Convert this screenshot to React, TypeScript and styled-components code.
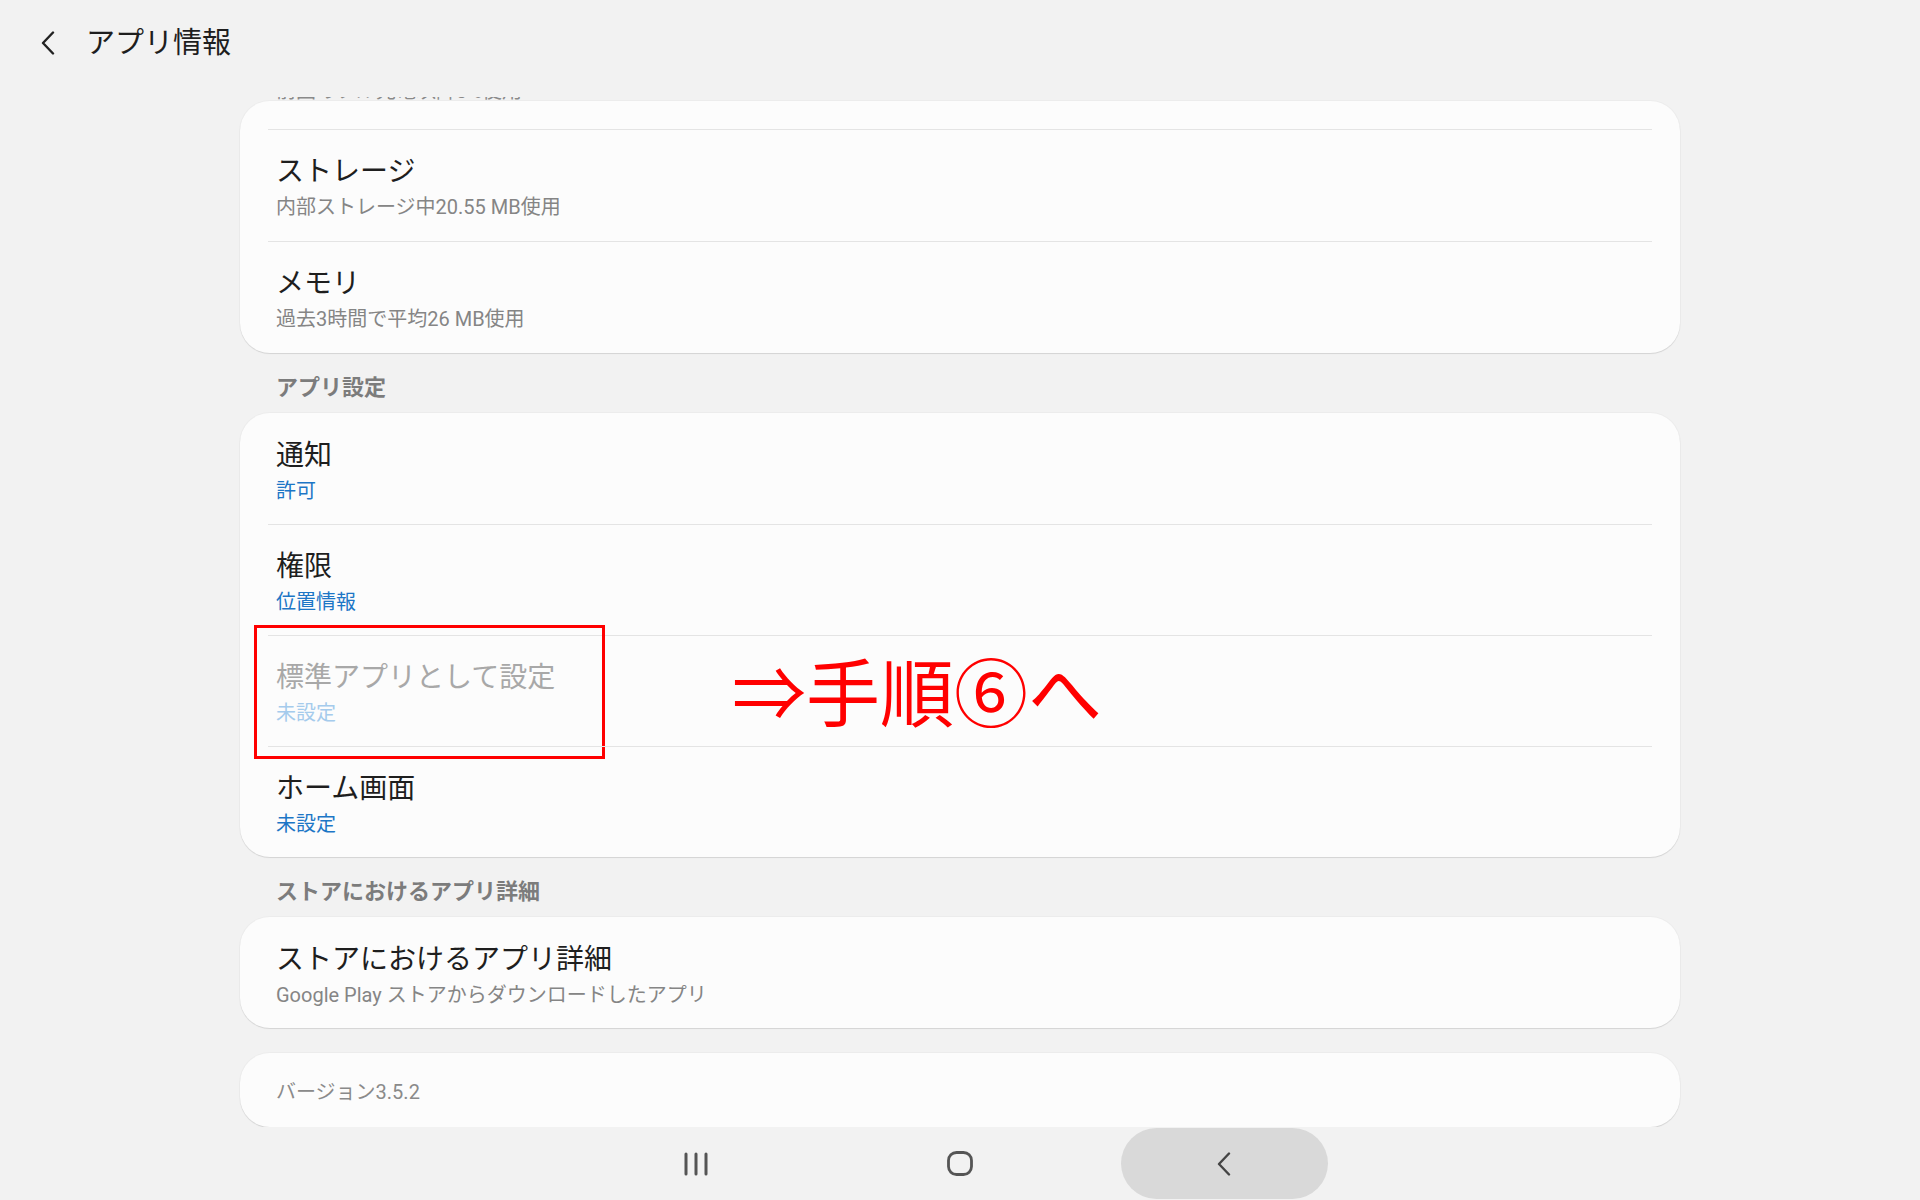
import styled, { createGlobalStyle } from 'styled-components';

const GlobalStyle = createGlobalStyle`
  html, body {
    margin: 0;
    padding: 0;
    background: #f2f2f2;
  }
  body {
    font-family: "Roboto", "Noto Sans CJK JP", sans-serif;
    color: #1e1e1e;
  }
  * {
    box-sizing: border-box;
  }
`;

const Screen = styled.div`
  width: 1920px;
  height: 1200px;
  display: flex;
  flex-direction: column;
  overflow: hidden;
  background: #f2f2f2;
`;

const Header = styled.header`
  height: 97px;
  flex: none;
  display: flex;
  align-items: flex-start;
  gap: 31px;
  padding: 27px 0 0 41px;
`;

const HeaderLine = styled.div`
  height: 32px;
  display: flex;
  align-items: center;
`;

const HeaderTitle = styled.h1`
  margin: 0;
  font-size: 29px;
  font-weight: 400;
  line-height: 32px;
  color: #1e1e1e;
`;

const Viewport = styled.main`
  flex: 1;
  overflow: hidden;
`;

const Column = styled.div`
  width: 1440px;
  margin: 0 auto;
  display: flex;
  flex-direction: column;
`;

// last line of the item scrolled away above the first card
const Peek = styled.div`
  height: 4px;
  overflow: hidden;
  padding-left: 36px;
  font-size: 20px;
  line-height: 28px;
  color: #8a8a8a;

  span {
    display: block;
    margin-top: -20px;
  }
`;

const Card = styled.section`
  background: #fcfcfc;
  border-radius: 30px;
  box-shadow: 0 0 0 1px rgba(0, 0, 0, 0.025), 0 1px 1px rgba(0, 0, 0, 0.1);
  display: flex;
  flex-direction: column;
`;

const TopStub = styled.div`
  height: 28px;
`;

const Row = styled.div<{ $height?: number; $divider?: boolean }>`
  position: relative;
  height: ${(p) => p.$height ?? 111}px;
  padding: 24px 36px 0;
  display: flex;
  flex-direction: column;

  &::before {
    content: '';
    display: ${(p) => (p.$divider ? 'block' : 'none')};
    position: absolute;
    top: 0;
    left: 28px;
    right: 28px;
    height: 1px;
    background: #e4e4e4;
  }
`;

const Title = styled.div<{ $disabled?: boolean }>`
  font-size: 28px;
  line-height: 38px;
  color: ${(p) => (p.$disabled ? '#a8a8a8' : '#1e1e1e')};
`;

const Sub = styled.div<{ $tone?: 'gray' | 'blue' | 'fadedBlue' }>`
  margin-top: 2px;
  font-size: 20px;
  line-height: 28px;
  color: ${(p) =>
    p.$tone === 'blue' ? '#1d76c6' : p.$tone === 'fadedBlue' ? '#a5cbec' : '#858585'};
`;

const SectionLabel = styled.div`
  height: 60px;
  padding: 22px 36px 0;
  font-size: 22px;
  line-height: 26px;
  font-weight: 700;
  color: #7c7c7c;
`;

const Gap = styled.div<{ $h: number }>`
  height: ${(p) => p.$h}px;
`;

const VersionRow = styled.div`
  height: 74px;
  padding: 0 36px;
  display: flex;
  align-items: center;
  font-size: 20px;
  color: #8a8a8a;
`;

const Marker = styled.div`
  position: absolute;
  left: 14px;
  top: -10px;
  width: 351px;
  height: 134px;
  border: 3px solid #f00;
  pointer-events: none;
`;

const Note = styled.div`
  position: absolute;
  left: 492px;
  top: 14px;
  font-family: "Noto Sans CJK JP", sans-serif;
  font-size: 74px;
  line-height: 80px;
  font-weight: 400;
  color: #f00;
  white-space: nowrap;
`;

const NavBar = styled.nav`
  height: 73px;
  flex: none;
  display: flex;
  justify-content: center;
  padding-top: 1px;
`;

const NavSlot = styled.div`
  width: 264px;
  height: 71px;
  display: flex;
  align-items: center;
  justify-content: center;
`;

const BackPill = styled.div`
  width: 207px;
  height: 71px;
  border-radius: 36px;
  background: #d9d9d9;
  display: flex;
  align-items: center;
  justify-content: center;
`;

const Chevron = ({ color, width, height, stroke }: { color: string; width: number; height: number; stroke: number }) => (
  <svg width={width} height={height} viewBox={`0 0 ${width} ${height}`} fill="none">
    <path
      d={`M${width - 2} 1.5 L2 ${height / 2} L${width - 2} ${height - 1.5}`}
      stroke={color}
      strokeWidth={stroke}
      strokeLinecap="round"
      strokeLinejoin="round"
    />
  </svg>
);

const RecentsIcon = () => (
  <svg width="26" height="24" viewBox="0 0 26 24">
    {[3, 13, 23].map((x) => (
      <line key={x} x1={x} y1="2" x2={x} y2="22" stroke="#555" strokeWidth="3" strokeLinecap="round" />
    ))}
  </svg>
);

const HomeIcon = () => (
  <svg width="26" height="25" viewBox="0 0 26 25">
    <rect x="1.5" y="1.5" width="23" height="22" rx="8" fill="none" stroke="#555" strokeWidth="2.8" />
  </svg>
);

export default function App() {
  return (
    <>
      <GlobalStyle />
      <Screen>
        <Header>
          <HeaderLine>
            <Chevron color="#222" width={14} height={24} stroke={2.4} />
          </HeaderLine>
          <HeaderTitle>アプリ情報</HeaderTitle>
        </Header>

        <Viewport>
          <Column>
            <Peek>
              <span>前回のフル充電以降0%使用</span>
            </Peek>
            <Card>
              <TopStub />
              <Row $height={112} $divider>
                <Title>ストレージ</Title>
                <Sub>内部ストレージ中20.55 MB使用</Sub>
              </Row>
              <Row $height={112} $divider>
                <Title>メモリ</Title>
                <Sub>過去3時間で平均26 MB使用</Sub>
              </Row>
            </Card>

            <SectionLabel>アプリ設定</SectionLabel>
            <Card>
              <Row>
                <Title>通知</Title>
                <Sub $tone="blue">許可</Sub>
              </Row>
              <Row $divider>
                <Title>権限</Title>
                <Sub $tone="blue">位置情報</Sub>
              </Row>
              <Row $divider>
                <Title $disabled>標準アプリとして設定</Title>
                <Sub $tone="fadedBlue">未設定</Sub>
                <Marker />
                <Note>⇒手順⑥へ</Note>
              </Row>
              <Row $divider>
                <Title>ホーム画面</Title>
                <Sub $tone="blue">未設定</Sub>
              </Row>
            </Card>

            <SectionLabel>ストアにおけるアプリ詳細</SectionLabel>
            <Card>
              <Row>
                <Title>ストアにおけるアプリ詳細</Title>
                <Sub>Google Play ストアからダウンロードしたアプリ</Sub>
              </Row>
            </Card>

            <Gap $h={25} />
            <Card>
              <VersionRow>バージョン3.5.2</VersionRow>
            </Card>
          </Column>
        </Viewport>

        <NavBar>
          <NavSlot>
            <RecentsIcon />
          </NavSlot>
          <NavSlot>
            <HomeIcon />
          </NavSlot>
          <NavSlot>
            <BackPill>
              <Chevron color="#444" width={14} height={24} stroke={2.4} />
            </BackPill>
          </NavSlot>
        </NavBar>
      </Screen>
    </>
  );
}
